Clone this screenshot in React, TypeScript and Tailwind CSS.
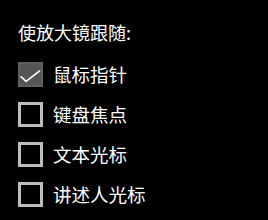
import React from "react";

const items = [
  { label: "鼠标指针", checked: true },
  { label: "键盘焦点", checked: false },
  { label: "文本光标", checked: false },
  { label: "讲述人光标", checked: false },
];

function Box({ checked }: { checked: boolean }) {
  if (checked) {
    return (
      <div className="w-[25px] h-[25px] bg-[#555555] border-2 border-[#606060] flex shrink-0">
        <svg width="21" height="21" viewBox="0 0 21 21" fill="none">
          <path d="M1.2 12.8 L6 17.4 L19.4 7" stroke="#ffffff" strokeWidth="1.6" strokeLinecap="square" />
        </svg>
      </div>
    );
  }
  return <div className="w-[25px] h-[25px] bg-black border-[3px] border-[#bdbdbd] shrink-0" />;
}

export default function App() {
  return (
    <div
      className="w-[268px] h-[220px] bg-black text-white pl-[18px] pt-[20px]"
      style={{ fontFamily: '"Noto Sans CJK SC", "Noto Sans", sans-serif' }}
    >
      <div className="text-[18px] leading-[24px]">使放大镜跟随:</div>
      <div className="flex flex-col gap-[15px] mt-[18px]">
        {items.map((it) => (
          <div key={it.label} className="flex items-center gap-[10px] h-[25px]">
            <Box checked={it.checked} />
            <span className="text-[18.5px] leading-[25px]">{it.label}</span>
          </div>
        ))}
      </div>
    </div>
  );
}
